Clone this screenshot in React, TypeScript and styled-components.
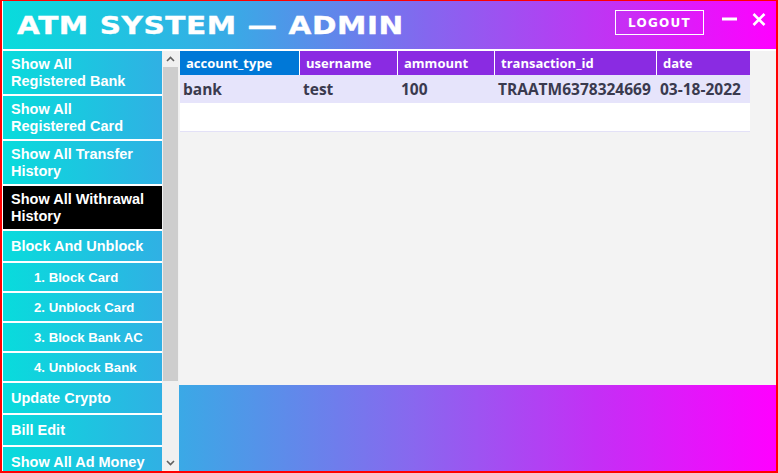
import styled, { createGlobalStyle } from "styled-components";

const GlobalStyle = createGlobalStyle`
    html, body {
        margin: 0;
        padding: 0;
        background: #ffffff;
    }
    * { box-sizing: border-box; }
`;

const StyledWindow = styled.div`
    width: 778px;
    height: 473px;
    border: 2px solid #ff0000;
    border-top-width: 1px;
    padding-left: 1px;
    background: #ffffff;
    display: flex;
    flex-direction: column;
    overflow: hidden;
`;

const StyledHeader = styled.header`
    height: 48px;
    flex-shrink: 0;
    display: flex;
    align-items: center;
    padding-left: 14px;
    background: linear-gradient(90deg, #08dcdc 0%, #3aa9e6 30%, #8566ef 55%, #c62ff4 80%, #ff00ff 100%);
`;

const StyledTitle = styled.h1`
    margin: 0;
    font-family: "DejaVu Sans", "Liberation Sans", sans-serif;
    font-weight: 700;
    font-size: 25px;
    color: #ffffff;
    letter-spacing: 0.5px;
    transform: scaleX(1.18);
    transform-origin: left center;
    white-space: nowrap;
    -webkit-text-stroke: 0.4px #ffffff;
`;

const StyledLogout = styled.button`
    margin-left: auto;
    width: 89px;
    height: 25px;
    border: 1px solid #ffffff;
    background: transparent;
    color: #ffffff;
    font-family: "DejaVu Sans", "Liberation Sans", sans-serif;
    font-weight: 700;
    font-size: 12px;
    letter-spacing: 1.3px;
    padding: 1px 0 0;
    cursor: pointer;
    margin-top: -6px;
`;

const StyledWinButtons = styled.div`
    display: flex;
    align-items: center;
    gap: 15px;
    margin-left: 18px;
    margin-right: 10px;
    margin-top: -12px;
`;

const StyledBody = styled.div`
    flex: 1;
    display: flex;
    margin-top: 2px;
    min-height: 0;
`;

const StyledSidebar = styled.nav`
    width: 159px;
    flex-shrink: 0;
    display: flex;
    flex-direction: column;
    gap: 2px;
    overflow: hidden;
`;

const StyledMenuItem = styled.div<{ $height: number; $active?: boolean; $sub?: boolean }>`
    height: ${(p) => p.$height}px;
    flex-shrink: 0;
    display: flex;
    align-items: center;
    padding-left: ${(p) => (p.$sub ? 31 : 8)}px;
    padding-right: 15px;
    background: ${(p) => (p.$active ? "#000000" : "linear-gradient(90deg, #08dcdc 0%, #30b0e4 100%)")};
    color: #ffffff;
    font-family: "Liberation Sans", Arial, sans-serif;
    font-weight: 700;
    font-size: ${(p) => (p.$sub ? 13.2 : 14.5)}px;
    line-height: 17px;
    cursor: pointer;
`;

const StyledScrollbar = styled.div`
    width: 17px;
    flex-shrink: 0;
    background: #f0f0f0;
    display: flex;
    flex-direction: column;
    align-items: center;
`;

const StyledScrollArrow = styled.div`
    height: 16px;
    width: 17px;
    display: flex;
    align-items: center;
    justify-content: center;
`;

const StyledThumb = styled.div`
    width: 15px;
    height: 314px;
    background: #cdcdcd;
`;

const StyledTrackFill = styled.div`
    flex: 1;
`;

const StyledMain = styled.main`
    flex: 1;
    background: #f3f3f3;
    display: flex;
    flex-direction: column;
`;

const StyledTable = styled.div`
    width: 570px;
    margin-left: 1px;
    border-bottom: 1px solid #e3e1f7;
    background: #ffffff;
`;

const StyledRow = styled.div<{ $head?: boolean; $height: number; $fill: string }>`
    display: grid;
    grid-template-columns: 119px 97px 96px 161px 93px;
    column-gap: 1px;
    height: ${(p) => p.$height}px;
    background: ${(p) => p.$fill};
    font-family: "Open Sans", "Noto Sans", sans-serif;
    font-weight: 700;
    font-size: ${(p) => (p.$head ? 13 : 15.5)}px;
`;

const StyledHeadCell = styled.div<{ $color: string }>`
    background: ${(p) => p.$color};
    color: #ffffff;
    display: flex;
    align-items: center;
    padding-left: 6px;
    white-space: nowrap;
`;

const StyledCell = styled.div`
    color: #3a3a4e;
    display: flex;
    align-items: center;
    padding-left: 3px;
    white-space: nowrap;
`;

const StyledSpacer = styled.div`
    flex: 1;
`;

const StyledBanner = styled.div`
    height: 86px;
    background: linear-gradient(90deg, #3aa9e6 0%, #8a66ef 40%, #c42ff5 70%, #ff00ff 100%);
`;

const menu = [
    { label: "Show All Registered Bank", h: 43 },
    { label: "Show All Registered Card", h: 43 },
    { label: "Show All Transfer History", h: 43 },
    { label: "Show All Withrawal History", h: 43, active: true },
    { label: "Block And Unblock", h: 30 },
    { label: "1. Block Card", h: 28, sub: true },
    { label: "2. Unblock Card", h: 28, sub: true },
    { label: "3. Block Bank AC", h: 28, sub: true },
    { label: "4. Unblock Bank", h: 28, sub: true },
    { label: "Update Crypto", h: 30 },
    { label: "Bill Edit", h: 30 },
    { label: "Show All Ad Money", h: 30 },
];

const columns = [
    { name: "account_type", color: "#0078d7" },
    { name: "username", color: "#8a2be2" },
    { name: "ammount", color: "#8a2be2" },
    { name: "transaction_id", color: "#8a2be2" },
    { name: "date", color: "#8a2be2" },
];

const rows = [["bank", "test", "100", "TRAATM6378324669", "03-18-2022"]];

export default function App() {
    return (
        <>
            <GlobalStyle />
            <StyledWindow>
                <StyledHeader>
                    <StyledTitle>ATM SYSTEM — ADMIN</StyledTitle>
                    <StyledLogout>LOGOUT</StyledLogout>
                    <StyledWinButtons>
                        <svg width="15" height="6" viewBox="0 0 15 6">
                            <rect x="0" y="1.5" width="15" height="3" fill="#ffffff" />
                        </svg>
                        <svg width="14" height="13" viewBox="0 0 14 13">
                            <path d="M1.5 1 L12.5 12 M12.5 1 L1.5 12" stroke="#ffffff" strokeWidth="2.6" />
                        </svg>
                    </StyledWinButtons>
                </StyledHeader>
                <StyledBody>
                    <StyledSidebar>
                        {menu.map((m) => (
                            <StyledMenuItem key={m.label} $height={m.h} $active={m.active} $sub={m.sub}>
                                {m.label}
                            </StyledMenuItem>
                        ))}
                    </StyledSidebar>
                    <StyledScrollbar>
                        <StyledScrollArrow>
                            <svg width="9" height="6" viewBox="0 0 9 6">
                                <path d="M1 5 L4.5 1.5 L8 5" stroke="#606060" strokeWidth="1.6" fill="none" />
                            </svg>
                        </StyledScrollArrow>
                        <StyledThumb />
                        <StyledTrackFill />
                        <StyledScrollArrow>
                            <svg width="9" height="6" viewBox="0 0 9 6">
                                <path d="M1 1 L4.5 4.5 L8 1" stroke="#606060" strokeWidth="1.6" fill="none" />
                            </svg>
                        </StyledScrollArrow>
                    </StyledScrollbar>
                    <StyledMain>
                        <StyledTable>
                            <StyledRow $head $height={24} $fill="#ffffff">
                                {columns.map((c) => (
                                    <StyledHeadCell key={c.name} $color={c.color}>
                                        {c.name}
                                    </StyledHeadCell>
                                ))}
                            </StyledRow>
                            {rows.map((r) => (
                                <StyledRow key={r[3]} $height={28} $fill="#e6e4fb">
                                    {r.map((v, i) => (
                                        <StyledCell key={i}>{v}</StyledCell>
                                    ))}
                                </StyledRow>
                            ))}
                            <StyledRow $height={28} $fill="#ffffff" />
                        </StyledTable>
                        <StyledSpacer />
                        <StyledBanner />
                    </StyledMain>
                </StyledBody>
            </StyledWindow>
        </>
    );
}
